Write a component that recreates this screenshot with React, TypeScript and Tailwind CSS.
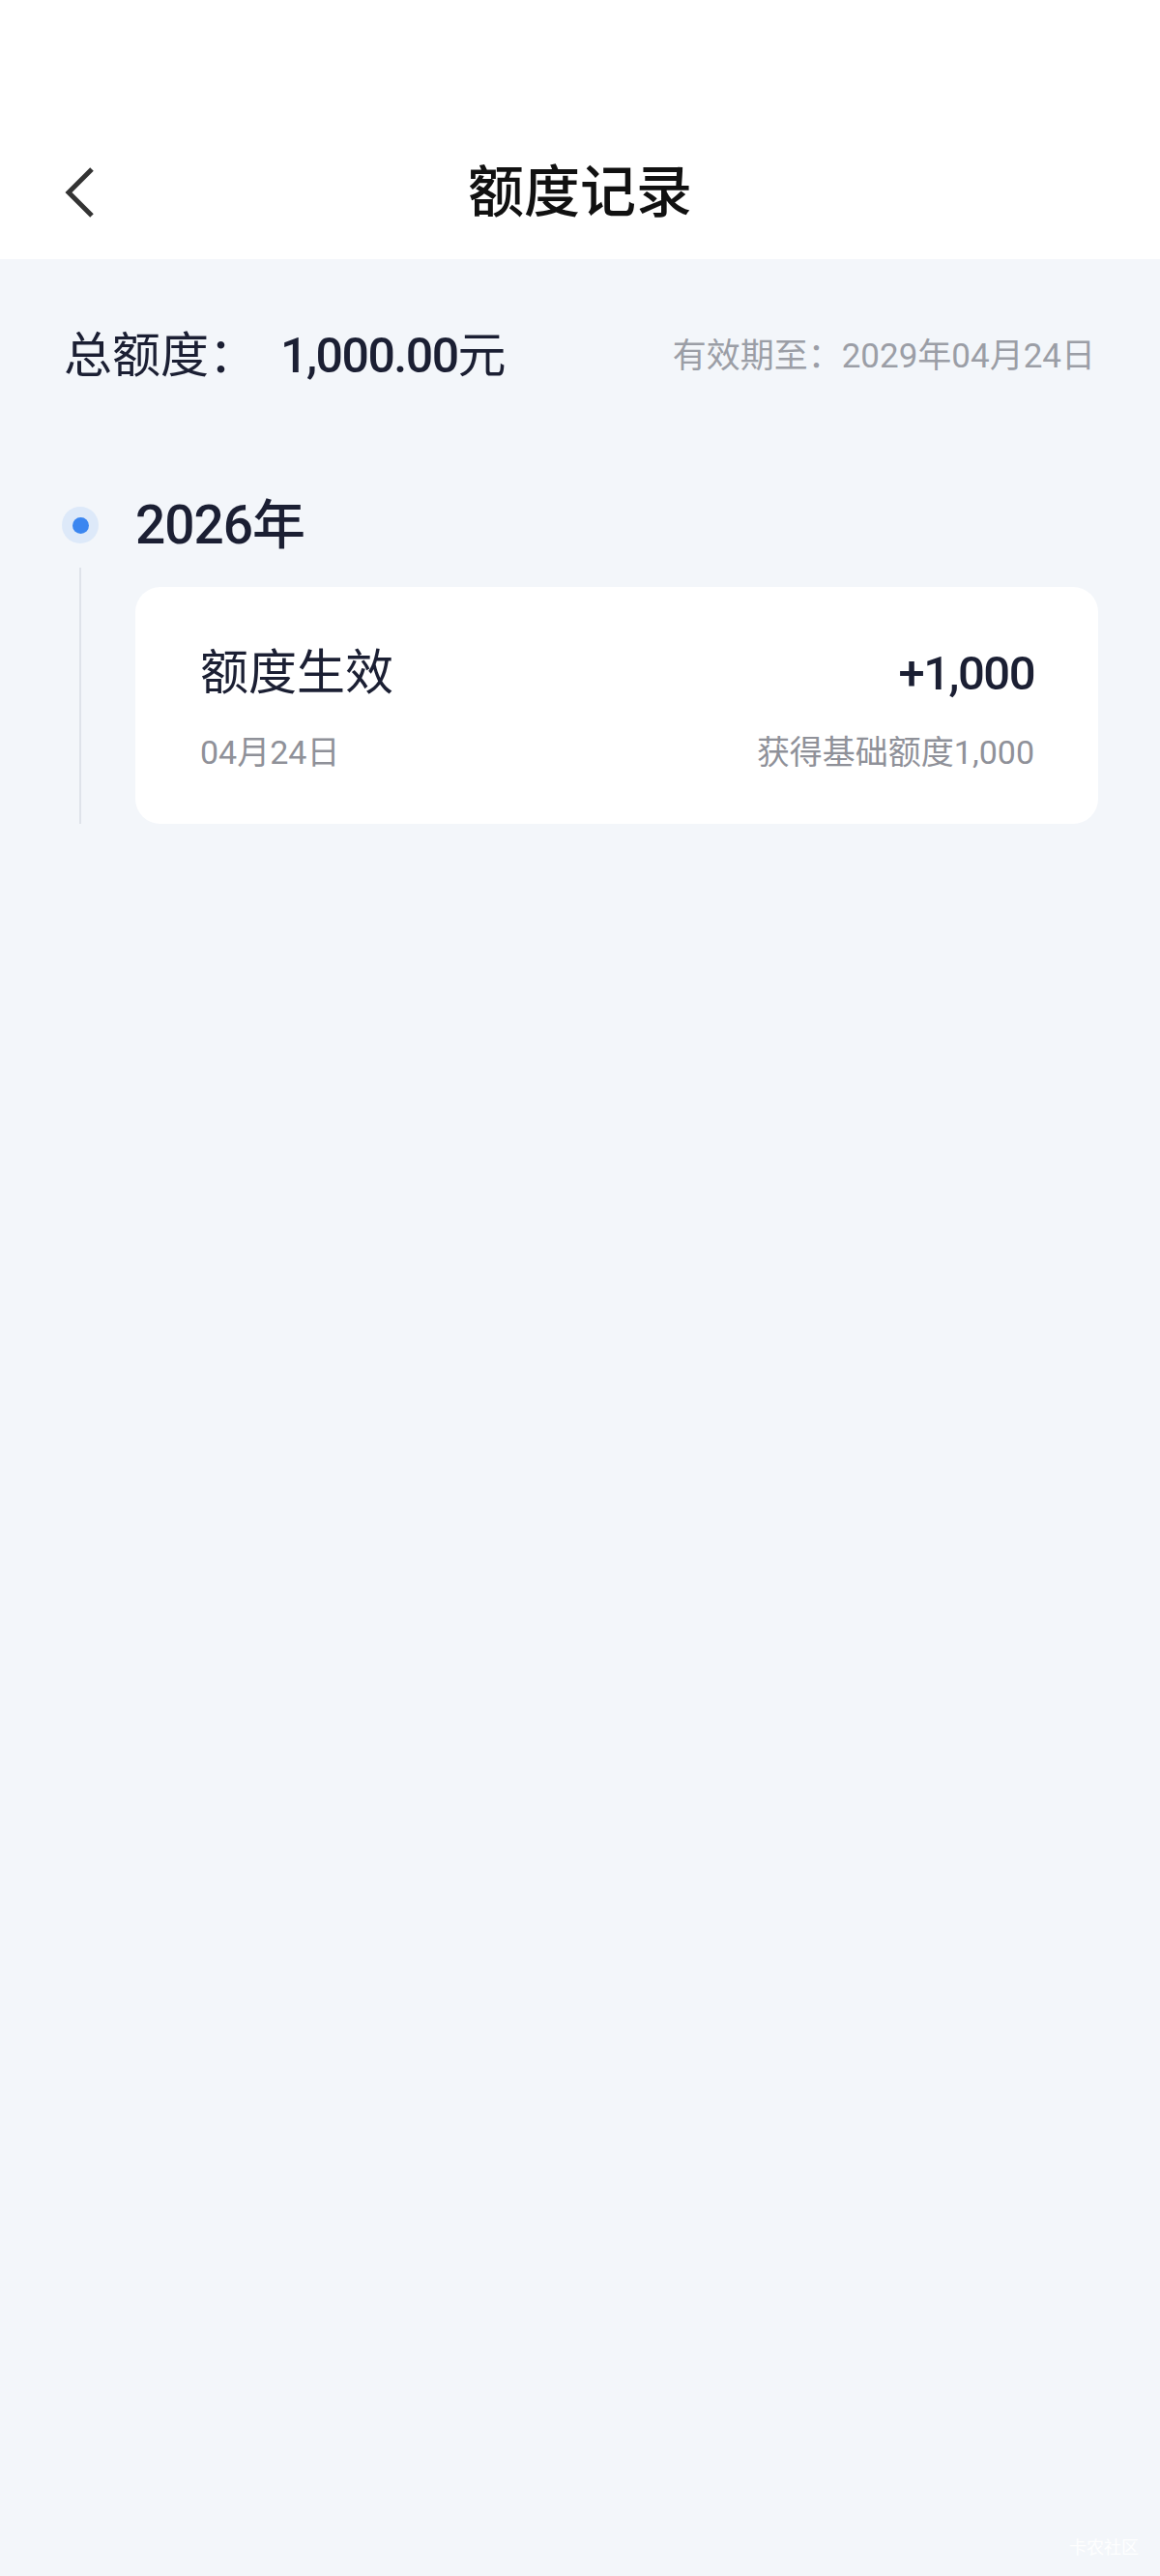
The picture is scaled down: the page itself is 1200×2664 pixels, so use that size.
import React from "react";

const FONT = "font-['Roboto','Noto_Sans_CJK_SC',sans-serif]";

export default function App() {
  return (
    <div className={`relative min-h-[2664px] w-[1200px] bg-[#f3f6fa] ${FONT}`}>
      {/* Header */}
      <div className="h-[268px] bg-white pt-[130px]">
        <div className="grid h-[138px] grid-cols-[1fr_auto_1fr] items-center">
          <div className="pl-[64px]">
            <svg width="36" height="56" viewBox="0 0 36 56" fill="none">
              <path
                d="M31 4 L7 28 L31 52"
                stroke="#333333"
                strokeWidth="5"
                strokeLinecap="butt"
                strokeLinejoin="miter"
              />
            </svg>
          </div>
          <div className="text-[58px] leading-none font-medium text-[#111111]">额度记录</div>
          <div />
        </div>
      </div>

      {/* Summary */}
      <div className="mt-[50px] flex h-[100px] items-center justify-between pl-[66px] pr-[67px]">
        <div className="flex items-center text-[50px] leading-none text-[#1b1f33]">
          <span>总额度：</span>
          <span className="ml-[24px] font-medium tracking-[-1.5px]">1,000.00</span>
          <span>元</span>
        </div>
        <div className="text-[35px] leading-none text-[#9b9ea6]">有效期至：2029年04月24日</div>
      </div>

      {/* Timeline */}
      <div className="mt-[95px] pl-[64px] pr-[64px]">
        <div className="flex h-[60px] items-center">
          <div className="flex h-[38px] w-[38px] items-center justify-center rounded-full bg-[#dde9f9]">
            <div className="h-[17px] w-[17px] rounded-full bg-[#3b86f0]" />
          </div>
          <div className="ml-[38px] text-[55px] leading-none font-medium tracking-[-1px] text-[#1b1f33]">
            2026年
          </div>
        </div>

        <div className="mt-[14px] flex">
          <div className="flex w-[38px] justify-center">
            <div className="w-[2px] bg-[#dfe3ea]" />
          </div>
          <div className="ml-[38px] mt-[20px] flex-1 rounded-[26px] bg-white pb-[52px] pl-[67px] pr-[66px] pt-[59px]">
            <div className="flex h-[60px] items-center justify-between text-[#1b1f33]">
              <span className="text-[50px] leading-none">额度生效</span>
              <span className="text-[49px] leading-none font-medium tracking-[-1.5px]">+1,000</span>
            </div>
            <div className="mt-[30px] flex h-[44px] items-center justify-between text-[34px] leading-none text-[#8f9199]">
              <span>04月24日</span>
              <span>获得基础额度1,000</span>
            </div>
          </div>
        </div>
      </div>

      {/* Watermark */}
      <div className="absolute bottom-[20px] right-[22px] text-[18px] leading-none text-white/90">卡农社区</div>
    </div>
  );
}
